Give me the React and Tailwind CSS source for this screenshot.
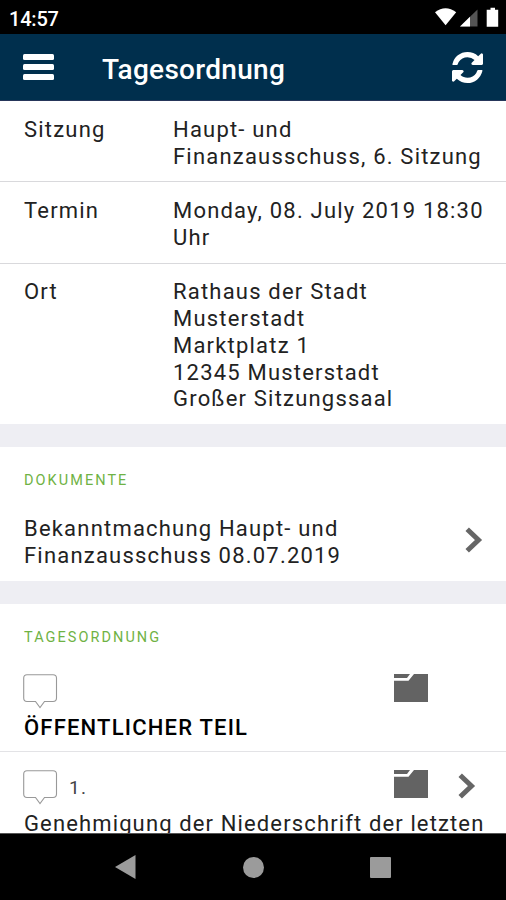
const details = [
  { label: 'Sitzung', lines: ['Haupt- und', 'Finanzausschuss, 6. Sitzung'] },
  { label: 'Termin', lines: ['Monday, 08. July 2019 18:30', 'Uhr'] },
  {
    label: 'Ort',
    lines: [
      'Rathaus der Stadt',
      'Musterstadt',
      'Marktplatz 1',
      '12345 Musterstadt',
      'Großer Sitzungssaal',
    ],
  },
];

const StatusBar = () => (
  <div className="flex h-[34px] shrink-0 items-center bg-black pl-[9px] pr-[7px] text-white">
    <span className="flex-1 pt-[3px] text-[20px] font-medium leading-none tracking-[-0.200px]">14:57</span>
    <svg width="64" height="20" viewBox="0 0 64 20">
      <path d="M0 5.300Q10.500 -3 21.200 5.300L10.600 18.300Z" fill="#fff" />
      <path d="M42.500 2.500V19.500H25Z" fill="#555" />
      <path d="M35 9.800V19.500H25Z" fill="#fff" />
      <path d="M55.500 0.800h4.500v2h3.200v17h-11.500v-17h3.800z" fill="#fff" />
    </svg>
  </div>
);

const RefreshIcon = () => (
  <svg width="31" height="31" viewBox="0 0 1536 1536" fill="currentColor">
    <path d="M1511 928q0 5-1 7-64 268-268 434.500t-478 166.500q-146 0-282.500-55t-243.500-157l-129 129q-19 19-45 19t-45-19-19-45v-448q0-26 19-45t45-19h448q26 0 45 19t19 45-19 45l-137 137q71 66 161 102t187 36q134 0 250-65t186-179q11-17 53-117 8-23 30-23h192q13 0 22.500 9.500t9.500 22.500zm25-800v448q0 26-19 45t-45 19h-448q-26 0-45-19t-19-45 19-45l138-138q-148-137-349-137-134 0-250 65t-186 179q-11 17-53 117-8 23-30 23h-199q-13 0-22.500-9.500t-9.500-22.500v-7q65-268 270-434.500t480-166.500q146 0 284 55.500t245 156.500l130-129q19-19 45-19t45 19 19 45z" />
  </svg>
);

const Header = () => (
  <header className="flex h-[67px] shrink-0 items-center border-b border-[#26365a] bg-[#002f4d] pl-[23px] pr-[23px] text-white">
    <div className="flex w-[31px] flex-col gap-[3.500px]">
      <span className="h-[6.500px] rounded-[1.500px] bg-white" />
      <span className="h-[6.500px] rounded-[1.500px] bg-white" />
      <span className="h-[6.500px] rounded-[1.500px] bg-white" />
    </div>
    <h1 className="flex-1 pl-12 pt-[5px] text-[28px] font-medium leading-none tracking-[0.300px]">Tagesordnung</h1>
    <RefreshIcon />
  </header>
);

const Chevron = () => (
  <svg width="18" height="26" viewBox="0 0 18 26" fill="none" stroke="#666" strokeWidth="5">
    <path d="M2.200 2.200L13.500 13L2.200 23.800" />
  </svg>
);

const Folder = () => (
  <svg width="34" height="28" viewBox="0 0 34 28" fill="#636363">
    <path d="M0 0H16L13 4H0Z" />
    <path d="M20 0H34V28H0V6.800H14.500Z" />
  </svg>
);

const Bubble = () => (
  <svg width="35" height="35" viewBox="0 0 35 35" fill="#fff" stroke="#999" strokeWidth="1.100">
    <path d="M4 .700H30Q33.500 .700 33.500 4V24Q33.500 27.500 30 27.500H21.500L17 33.500L12.500 27.500H4Q.700 27.500 .700 24V4Q.700 .700 4 .700Z" />
  </svg>
);

const SectionTitle = ({ children }) => (
  <h2 className="text-[14.500px] leading-[18px] tracking-[2.050px] text-[#6fb244]">{children}</h2>
);

const App = () => {
  return (
    <div className="flex h-[900px] w-[506px] flex-col overflow-hidden bg-white font-['Roboto',sans-serif] text-[22px] leading-[26.800px] tracking-[1.200px] text-[#222]">
      <div className="flex shrink-0 flex-col tracking-normal">
        <StatusBar />
        <Header />
      </div>

      <main className="min-h-0 flex-1 overflow-hidden">
        {details.map((row, i) => (
          <div
            key={row.label}
            className={`flex pl-6 ${i < details.length - 1 ? 'border-b border-[#d9d9dc] pt-4 pb-[10.900px]' : 'pt-[15.200px] pb-[10.800px]'}`}
          >
            <div className="w-[149px] shrink-0">{row.label}</div>
            <div className="whitespace-nowrap">
              {row.lines.map((line) => (
                <div key={line}>{line}</div>
              ))}
            </div>
          </div>
        ))}

        <div className="h-[23px] bg-[#eeeef3]" />

        {/* Documents */}
        <section className="h-[134px] px-6 pt-[25px]">
          <SectionTitle>DOKUMENTE</SectionTitle>
          <div className="flex items-start justify-between pt-[26px]">
            <div>
              Bekanntmachung Haupt- und
              <br />
              Finanzausschuss 08.07.2019
            </div>
            <div className="-mr-px pt-[11px]">
              <Chevron />
            </div>
          </div>
        </section>

        <div className="h-[23px] bg-[#eeeef3]" />

        {/* Agenda */}
        <section>
          <div className="h-[148.500px] border-b border-[#e3e3e6] pl-[23px] pt-[25px]">
            <div className="pl-px">
              <SectionTitle>TAGESORDNUNG</SectionTitle>
            </div>
            <div className="flex items-start pt-[27px]">
              <Bubble />
              <div className="pl-[336px]">
                <Folder />
              </div>
            </div>
            <div className="pl-px pt-1.5 font-medium text-black">ÖFFENTLICHER TEIL</div>
          </div>
          <div className="pl-[23px] pt-[17.500px]">
            <div className="flex items-start">
              <Bubble />
              <span className="w-[336px] pl-[11px] pt-[5px] text-[19px] text-[#444]">1.</span>
              <Folder />
              <div className="pl-[30px] pt-[3px]">
                <Chevron />
              </div>
            </div>
            <div className="whitespace-nowrap pl-px pt-1.5 tracking-[1.130px]">Genehmigung der Niederschrift der letzten</div>
          </div>
        </section>
      </main>

      <nav className="flex h-[67px] shrink-0 items-center justify-between border-t border-[#555] bg-black pl-[115px] pr-[115px]">
        <svg width="21" height="24" viewBox="0 0 21 24" fill="#9b9b9b">
          <path d="M0 12L20.500 0V24Z" />
        </svg>
        <span className="size-[21px] rounded-full bg-[#9b9b9b]" />
        <span className="size-[21px] rounded-[1px] bg-[#9b9b9b]" />
      </nav>
    </div>
  );
};

export default App;
